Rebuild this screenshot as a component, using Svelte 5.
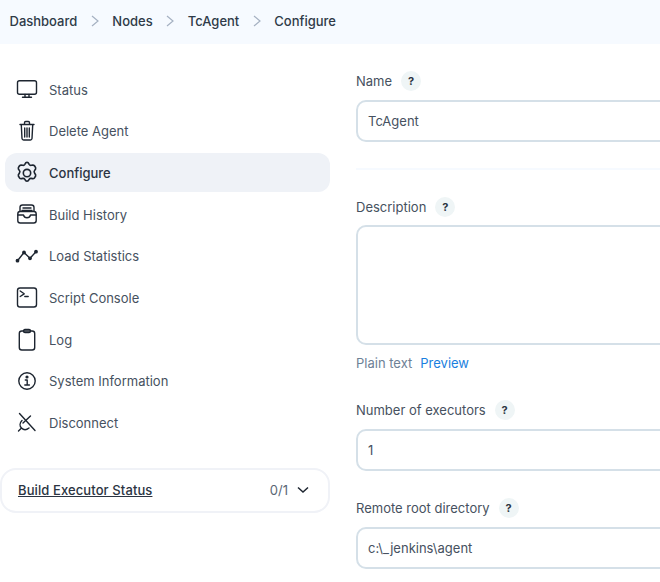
<script>
	const crumbs = ['Dashboard', 'Nodes', 'TcAgent', 'Configure'];
	const tasks = [
		{name: 'Status', icon: 'status'},
		{name: 'Delete Agent', icon: 'trash'},
		{name: 'Configure', icon: 'gear', active: true},
		{name: 'Build History', icon: 'history'},
		{name: 'Load Statistics', icon: 'stats'},
		{name: 'Script Console', icon: 'console'},
		{name: 'Log', icon: 'log'},
		{name: 'System Information', icon: 'info'},
		{name: 'Disconnect', icon: 'unplug'},
	];
</script>

<nav class="crumbs">
	{#each crumbs as c, i}
		{#if i}
			<svg class="sep" viewBox="0 0 8 12" width="8" height="12"><path d="M1 1 7 6l-6 5" /></svg>
		{/if}
		<span>{c}</span>
	{/each}
</nav>

<div class="page">
	<aside>
		<ul>
			{#each tasks as t}
				<li class:active={t.active}>
					<svg class="icon" viewBox="0 0 24 24" width="24" height="24">
						{#if t.icon == 'status'}
							<rect x="2.500" y="2.700" width="19" height="13.600" rx="2" />
							<path d="M10 16.500v2.500M14 16.500v2.500M7.500 19.300h9" />
						{:else if t.icon == 'trash'}
							<path d="M5 5.500h14M9.500 5V3.700c0-.7.500-1.200 1.200-1.200h2.600c.7 0 1.200.5 1.200 1.200V5" />
							<path d="M6.300 6l.7 13.500c.1 1 .8 1.500 1.600 1.500h6.800c.8 0 1.500-.5 1.600-1.500L17.700 6" />
							<path d="M9.700 9v9M12 9v9M14.300 9v9" />
						{:else if t.icon == 'gear'}
							<g transform="translate(12 12) scale(1.150) translate(-12 -12)">
								<path d="M12 2.800c1 0 1.400.6 1.900 1.700.4.8 1 1 1.900.8 1.200-.3 2-.4 2.700.4l1 1.700c.4 1-.1 1.600-.9 2.500-.6.7-.6 1.400 0 2.200.8.9 1.300 1.500.9 2.500l-1 1.700c-.7.8-1.500.7-2.700.4-.9-.2-1.500 0-1.900.8-.5 1.100-.9 1.700-1.900 1.700s-1.400-.6-1.900-1.700c-.4-.8-1-1-1.900-.8-1.200.3-2 .4-2.700-.4l-1-1.700c-.4-1 .1-1.600.9-2.500.6-.8.6-1.500 0-2.200-.8-.9-1.300-1.500-.9-2.500l1-1.700c.7-.8 1.500-.7 2.700-.4.9.2 1.500 0 1.900-.8.5-1.100.9-1.700 1.900-1.700z" />
								<circle cx="12" cy="12" r="3.200" />
							</g>
						{:else if t.icon == 'history'}
							<g transform="translate(0 -1)">
								<path d="M5 9V5.500C5 4 6 3 7.500 3h9C18 3 19 4 19 5.500V9" />
								<path d="M8 6h8M7 8.500h10" />
								<path d="M2.800 12c0-1.500 1-2.500 2.200-2.500h14c1.200 0 2.200 1 2.200 2.500v6.500c0 1.500-1 2.500-2.500 2.500H5.300c-1.500 0-2.500-1-2.500-2.500z" />
								<path d="M3 13h5.500c.5 2 1.700 2.800 3.500 2.800s3-.8 3.500-2.800H21" />
							</g>
						{:else if t.icon == 'stats'}
							<path d="M2.500 16.700 9 8.500l6 5.800 6-6.600" />
							<circle cx="2.500" cy="16.700" r="1.200" class="dot" />
							<circle cx="9" cy="8.500" r="1.200" class="dot" />
							<circle cx="15" cy="14.300" r="1.200" class="dot" />
							<circle cx="21" cy="7.700" r="1.200" class="dot" />
						{:else if t.icon == 'console'}
							<rect x="2.500" y="2" width="19" height="19" rx="2.500" />
							<path d="M5.200 5l4 2.800-4 2.700M9.800 10.500h3.400" />
						{:else if t.icon == 'log'}
							<rect x="4.300" y="3" width="15.400" height="19" rx="2.500" />
							<path d="M8.500 3c0-1 .5-1.500 1.500-1.500h4c1 0 1.500.5 1.500 1.500s-.5 1.500-1.500 1.500h-4c-1 0-1.500-.5-1.500-1.500z" />
						{:else if t.icon == 'info'}
							<circle cx="12" cy="12" r="8.200" />
							<path d="M10.300 11h1.900v4.800M9.800 16h4.600" />
							<circle cx="12" cy="8" r=".9" class="dot" />
						{:else if t.icon == 'unplug'}
							<path d="M4.500 2.500 20 19.500M15.500 5 8 12" />
							<path d="M7 9.500c-2.500 2.500-2.500 5.500-.5 7.500s5 2 7.500 0M6.500 17 3.500 20" />
						{/if}
					</svg>
					<span>{t.name}</span>
				</li>
			{/each}
		</ul>

		<section class="executors">
			<u>Build Executor Status</u>
			<span class="count">0/1</span>
			<svg viewBox="0 0 14 10" width="14" height="10"><path d="M2 2.500 7 7l5-4.500" /></svg>
		</section>
	</aside>

	<main>
		<div class="label first">Name <b class="help">?</b></div>
		<div class="input">TcAgent</div>
		<hr>
		<div class="label desc">Description <b class="help">?</b></div>
		<div class="input area"></div>
		<div class="format"><span>Plain text</span> <a href="#preview">Preview</a></div>
		<div class="label execs">Number of executors <b class="help">?</b></div>
		<div class="input">1</div>
		<div class="label root">Remote root directory <b class="help">?</b></div>
		<div class="input">c:\_jenkins\agent</div>
	</main>
</div>

<style>
	:global(body) {
		overflow: hidden;
		background: #fff;
		color: #14141f;
		font-family: Inter, "Noto Sans", sans-serif;
		font-size: 13px;
	}
	.crumbs {
		height: 42px;
		padding-bottom: 2px;
		background: #f6faff;
		display: flex;
		align-items: center;
		padding-left: 9.500px;
		gap: 13.500px;
		color: #2f3a48;
		font-weight: 500;
		white-space: nowrap;
	}
	.sep path {
		fill: none;
		stroke: #a5b1c2;
		stroke-width: 1.200;
	}
	.page {
		display: grid;
		grid-template-columns: 330px 800px;
		column-gap: 26px;
	}
	aside {
		padding-left: 5px;
		padding-top: 26px;
	}
	ul {
		list-style: none;
		margin: 0;
		padding: 0;
		display: flex;
		flex-direction: column;
		gap: 2.700px;
	}
	li {
		height: 39px;
		display: flex;
		align-items: center;
		gap: 10px;
		padding-left: 10px;
		border-radius: 12px;
		color: #465160;
	}
	li.active {
		background: #eff2f7;
		color: #2b3442;
		font-weight: 500;
	}
	.icon {
		flex: none;
		fill: none;
		stroke: #1d2530;
		stroke-width: 1.400;
		stroke-linecap: round;
		stroke-linejoin: round;
	}
	.icon .dot {
		fill: #1d2530;
	}
	.executors {
		margin: 25px 0 0 -5px;
		height: 41px;
		border: 2px solid #f0f2f7;
		border-radius: 16px;
		display: flex;
		align-items: center;
		padding: 0 18px 0 16px;
	}
	.executors u {
		font-weight: 500;
		letter-spacing: 0.100px;
		color: #2b3442;
		flex: 1;
	}
	.count {
		color: #5a6675;
		margin-right: 8px;
	}
	.executors path {
		fill: none;
		stroke: #1d2530;
		stroke-width: 1.500;
	}
	main {
		display: flex;
		flex-direction: column;
	}
	.label {
		display: flex;
		align-items: center;
		gap: 9px;
		height: 20px;
		color: #465160;
	}
	.first {
		margin-top: 27px;
		margin-bottom: 9px;
	}
	.desc {
		margin-top: 27px;
		margin-bottom: 8px;
	}
	.execs {
		margin-top: 28px;
		margin-bottom: 9px;
	}
	.root {
		margin-top: 27px;
		margin-bottom: 9px;
	}
	.help {
		width: 20px;
		height: 20px;
		border-radius: 50%;
		background: #eff5f6;
		color: #2b3442;
		font-size: 11px;
		font-weight: 700;
		display: flex;
		align-items: center;
		justify-content: center;
	}
	.input {
		height: 42px;
		box-sizing: border-box;
		border: 2px solid #d5e0e8;
		border-radius: 10px;
		padding-left: 10px;
		display: flex;
		align-items: center;
		color: #465160;
	}
	.area {
		height: 120px;
	}
	hr {
		width: 100%;
		border: none;
		height: 2px;
		background: #f6faff;
		margin: 26px 0 0;
	}
	.format {
		margin-top: 9px;
		height: 18px;
		display: flex;
		align-items: center;
		gap: 8px;
	}
	.format span {
		color: #6d8196;
	}
	.format a {
		color: #1a7fe0;
		text-decoration: none;
	}
</style>
